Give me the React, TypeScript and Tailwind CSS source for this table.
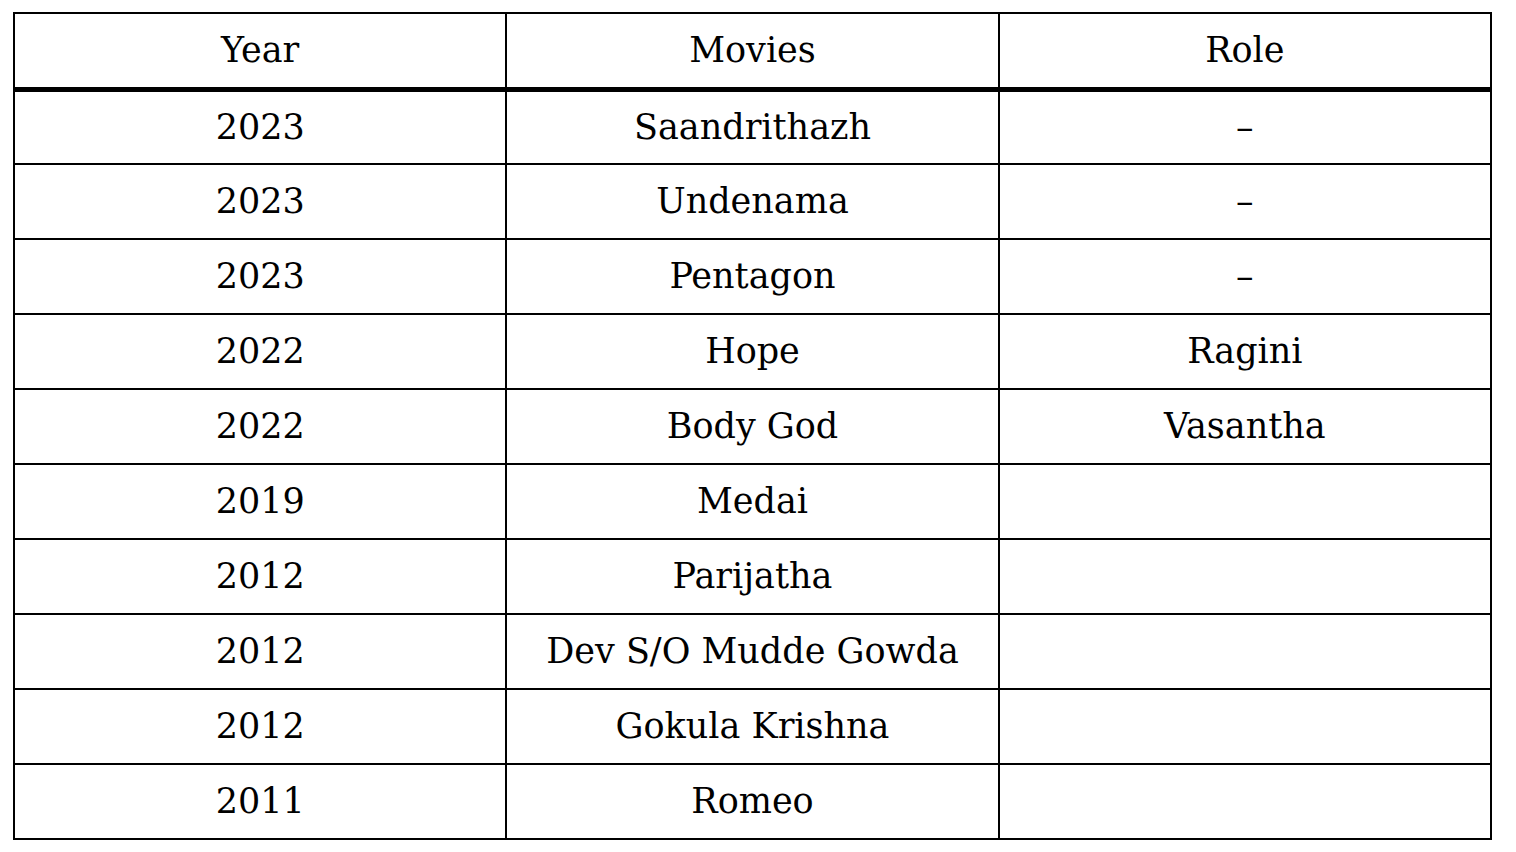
const films = [
  { year: "2023", movie: "Saandrithazh", role: "–" },
  { year: "2023", movie: "Undenama", role: "–" },
  { year: "2023", movie: "Pentagon", role: "–" },
  { year: "2022", movie: "Hope", role: "Ragini" },
  { year: "2022", movie: "Body God", role: "Vasantha" },
  { year: "2019", movie: "Medai", role: "" },
  { year: "2012", movie: "Parijatha", role: "" },
  { year: "2012", movie: "Dev S/O Mudde Gowda", role: "" },
  { year: "2012", movie: "Gokula Krishna", role: "" },
  { year: "2011", movie: "Romeo", role: "" },
];

export default function App() {
  return (
    <div className="bg-white min-h-screen pt-[12px] pl-[13px] font-['DejaVu_Serif',serif] text-black">
      <table className="table-fixed border-collapse w-[1479px] text-[35px]">
        <thead>
          {/* Header */}
          <tr className="h-[76px] border-b-[5px] border-black">
            <th className="w-1/3 border-2 border-black font-normal text-center">Year</th>
            <th className="w-1/3 border-2 border-black font-normal text-center">Movies</th>
            <th className="w-1/3 border-2 border-black font-normal text-center">Role</th>
          </tr>
        </thead>
        <tbody>
          {films.map((f, i) => (
            <tr key={i} className="h-[75px]">
              <td className="border-2 border-black text-center">{f.year}</td>
              <td className="border-2 border-black text-center">{f.movie}</td>
              <td className="border-2 border-black text-center">{f.role}</td>
            </tr>
          ))}
        </tbody>
      </table>
    </div>
  );
}
